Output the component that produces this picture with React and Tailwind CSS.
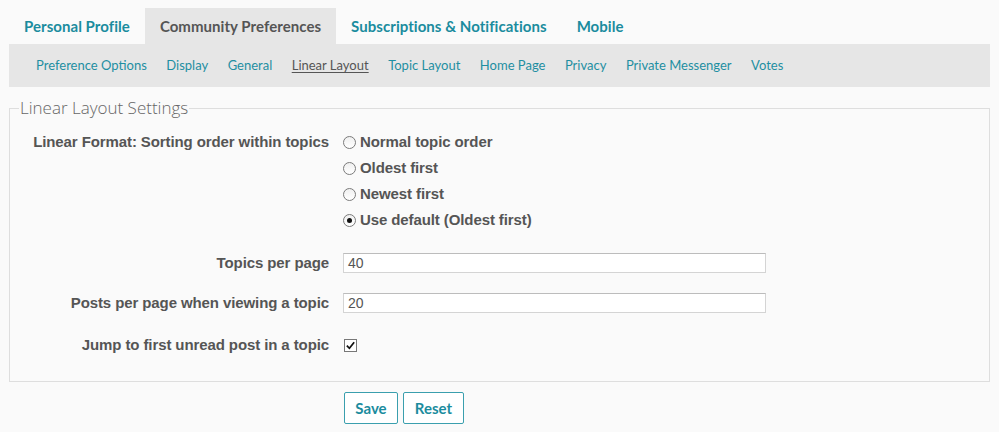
import React from 'react';

const TABS = ['Personal Profile', 'Community Preferences', 'Subscriptions & Notifications', 'Mobile'];
const SUBNAV = ['Preference Options', 'Display', 'General', 'Linear Layout', 'Topic Layout', 'Home Page', 'Privacy', 'Private Messenger', 'Votes'];
const ORDERS = ['Normal topic order', 'Oldest first', 'Newest first', 'Use default (Oldest first)'];

const navFont = { fontFamily: 'Lato, "Open Sans", sans-serif' };
const formFont = { fontFamily: '"Liberation Sans", Arial, sans-serif' };

export default function App() {
  return <div className="min-h-[432px] w-[999px] bg-[#fafafa] pt-[8px]">
    <div className="flex pl-[9px]" style={navFont}>
      {TABS.map(tab => {
        const active = tab === 'Community Preferences';
        return <div key={tab} className={`flex h-[36px] items-center px-[15px] text-[15px] font-bold tracking-[0.05px] ${active ? 'bg-[#e6e6e6] text-[#555]' : 'text-[#1b8c9e]'}`}>
          {tab}
        </div>;
      })}
    </div>

    <div className="ml-[9px] flex h-[43px] w-[981px] items-center gap-[19.5px] bg-[#e6e6e6] pl-[27px] text-[13px]" style={navFont}>
      {SUBNAV.map(item => <span key={item} className={item === 'Linear Layout' ? 'text-[#555] underline underline-offset-2' : 'text-[#1f8fa2]'}>{item}</span>)}
    </div>

    <fieldset className="ml-[9px] mt-[11px] w-[981px] border border-[#dedede] pb-[26px]" style={formFont}>
      <legend className="ml-[9px] px-[1px] text-[17px] leading-[20px] text-[#666]" style={{ fontFamily: '"Open Sans", sans-serif', fontWeight: 300 }}>Linear Layout Settings</legend>

      <div className="mt-[11px] grid grid-cols-[319px_1fr] gap-x-[14px] text-[15px] tracking-[-0.1px] text-[#555]">
        <div className="h-[26px] text-right font-bold leading-[26px]">Linear Format: Sorting order within topics</div>
        <div className="flex flex-col">
          {ORDERS.map((o, i) => <label key={o} className="flex h-[26px] items-center gap-[4px] font-bold">
            <Radio checked={i === 3}/>
            {o}
          </label>)}
        </div>

        <div className="mt-[20px] h-[20px] text-right font-bold leading-[20px]">Topics per page</div>
        <div className="mt-[20px]"><TextBox value="40"/></div>

        <div className="mt-[20px] h-[20px] text-right font-bold leading-[20px]">Posts per page when viewing a topic</div>
        <div className="mt-[20px]"><TextBox value="20"/></div>

        <div className="mt-[22px] h-[20px] text-right font-bold leading-[20px]">Jump to first unread post in a topic</div>
        <div className="mt-[22px] flex h-[20px] items-center pl-[1px]"><Check/></div>
      </div>
    </fieldset>

    <div className="ml-[344px] mt-[10px] flex gap-[5px]" style={navFont}>
      <button type="button" className="h-[32px] w-[54px] rounded-[2px] border border-[#3a9fae] bg-white text-[15px] font-bold text-[#1b8c9e]">Save</button>
      <button type="button" className="h-[32px] w-[61px] rounded-[2px] border border-[#3a9fae] bg-white text-[15px] font-bold text-[#1b8c9e]">Reset</button>
    </div>
  </div>;
}

function Radio({ checked }) {
  return <span className="grid h-[13px] w-[13px] place-items-center rounded-full border border-[#7a7a7a] bg-gradient-to-b from-[#f0f0f0] to-white">
    {checked && <span className="h-[5px] w-[5px] rounded-full bg-[#111]"/>}
  </span>;
}

function TextBox({ value }) {
  return <div className="flex h-[20px] w-[423px] items-center border border-[#d4d4d4] border-t-[#bcbcbc] bg-white pl-[4px] text-[14px] tracking-normal text-[#555]">{value}</div>;
}

function Check() {
  return <span className="grid h-[13px] w-[13px] place-items-center border border-[#777] bg-white">
    <svg viewBox="0 0 12 12" className="h-[11px] w-[11px]">
      <path d="M2 6.2 L4.8 9 L10 2.5" fill="none" stroke="#111" strokeWidth="1.9"/>
    </svg>
  </span>;
}
